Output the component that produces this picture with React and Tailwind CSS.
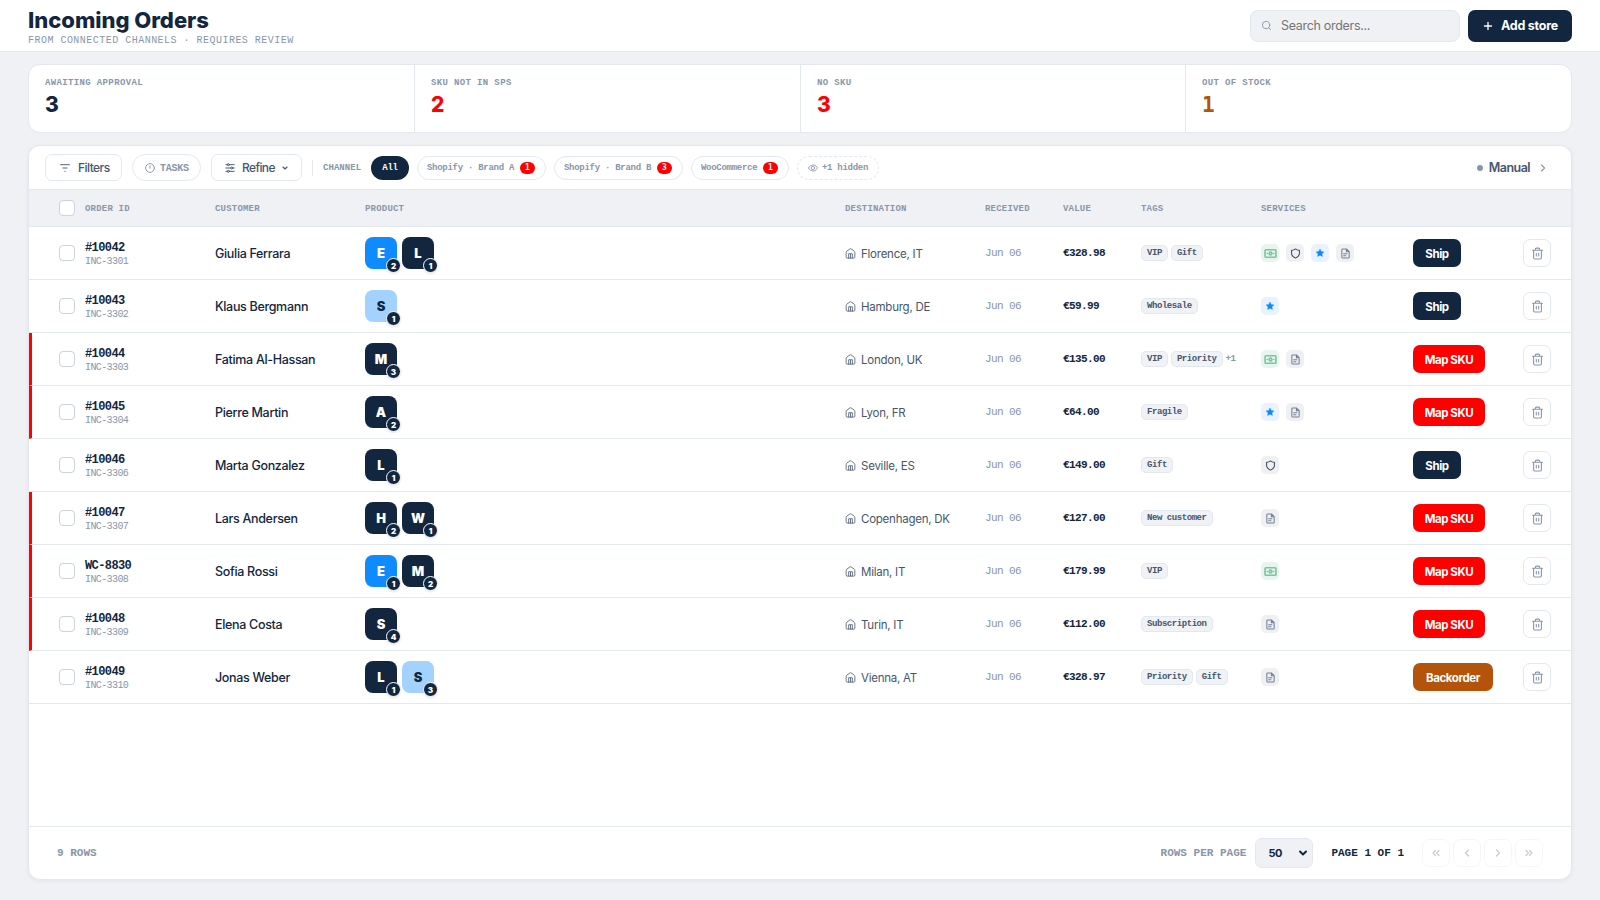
import React from 'react';
import { ChevronRight, ChevronLeft, ChevronsLeft, ChevronsRight, ChevronDown, Search, Plus } from 'lucide-react';

const SANS = "font-['Inter',sans-serif]";
const MONO = "font-['Liberation_Mono',monospace]";
const SLAB = "font-['DejaVu_Sans_Mono',monospace]";

function Svg({ className, children, width = 1.8 }) {
  return (
    <svg viewBox="0 0 24 24" fill="none" stroke="currentColor" strokeWidth={width} strokeLinecap="round" strokeLinejoin="round" className={className}>
      {children}
    </svg>
  );
}

const House = () => (
  <Svg className="h-[11px] w-[11px] shrink-0 text-[#5b6b82]" width={2}>
    <path d="M2.500 9.500 Q2.500 8 3.800 7 L10.500 2.200 Q12 1.200 13.500 2.200 L20.200 7 Q21.500 8 21.500 9.500 V20 Q21.500 22 19.500 22 H4.500 Q2.500 22 2.500 20 Z" />
    <path d="M8 22 V12.500 H16 V22 M12 14 V22" />
  </Svg>
);

const Trash = () => (
  <Svg className="h-[13px] w-[13px] text-[#8896ab]" width={2}>
    <path d="M2.800 6 H21.200 M8 6 V4 Q8 2 10 2 H14 Q16 2 16 4 V6 M4.800 6 V20 Q4.800 22 6.800 22 H17.200 Q19.200 22 19.200 20 V6 M9.800 11.500 V16.500 M14.200 11.500 V16.500" />
  </Svg>
);

const SERVICES = {
  cash: {
    box: 'bg-[#e8f5ef] text-[#7cc4a2]',
    icon: (
      <Svg className="h-[13px] w-[13px]" width={3}>
        <rect x="2" y="5" width="20" height="14" rx="1.500" />
        <circle cx="12" cy="12" r="2.600" />
        <path d="M6 12 H6.100 M17.900 12 H18" />
      </Svg>
    ),
  },
  shield: {
    box: 'bg-[#eff0f2] text-[#33445c]',
    icon: (
      <Svg className="h-[11px] w-[11px]" width={2.200}>
        <path d="M12 2 L14.500 3.600 Q17 5 20.500 5 V12 Q20.500 18 12 22 Q3.500 18 3.500 12 V5 Q7 5 9.500 3.600 Z" />
      </Svg>
    ),
  },
  star: {
    box: 'bg-[#e8f3ff] text-[#0d8bff]',
    icon: (
      <svg viewBox="0 0 24 24" fill="currentColor" className="-ml-px h-[10px] w-[10px]">
        <path d="M12 2.500 L14.900 8.400 L21.400 9.300 L16.700 13.900 L17.800 20.400 L12 17.300 L6.200 20.400 L7.300 13.900 L2.600 9.300 L9.100 8.400 Z" stroke="currentColor" strokeWidth="1" strokeLinejoin="round" />
      </svg>
    ),
  },
  doc: {
    box: 'bg-[#eff0f2] text-[#718096]',
    icon: (
      <Svg className="h-[11px] w-[11px]" width={2.300}>
        <path d="M14 2 H6 Q4 2 4 4 V20 Q4 22 6 22 H18 Q20 22 20 20 V8 Z M14 2 V8 H20 M8 12.500 H15 M8 17 H13" />
      </Svg>
    ),
  },
};

const TONES = {
  blue: 'bg-[#0d8bff] text-white',
  navy: 'bg-[#122640] text-white',
  sky: 'bg-[#a3d2ff] text-[#122640]',
};

const ACTIONS = {
  Ship: 'w-12 bg-[#122640]',
  'Map SKU': 'w-[72px] bg-[#ff0000]',
  Backorder: 'w-20 bg-[#b45309]',
};

const STATS = [
  { label: 'AWAITING APPROVAL', value: '3', style: 'font-extrabold text-[#122640]' },
  { label: 'SKU NOT IN SPS', value: '2', style: 'font-extrabold text-[#ff0000]' },
  { label: 'NO SKU', value: '3', style: 'font-extrabold text-[#ff0000]' },
  { label: 'OUT OF STOCK', value: '1', style: `${SLAB} font-bold text-[#b45309]` },
];

const CHANNELS = [
  { name: 'Shopify · Brand A', count: 1, width: 'w-[129px]' },
  { name: 'Shopify · Brand B', count: 3, width: 'w-[129px]' },
  { name: 'WooCommerce', count: 1, width: 'w-[98px]' },
];

const ORDERS = [
  { id: '#10042', ref: 'INC-3301', name: 'Giulia Ferrara', items: [['E', 2, 'blue'], ['L', 1, 'navy']], dest: 'Florence, IT', value: '€328.98', tags: ['VIP', 'Gift'], services: ['cash', 'shield', 'star', 'doc'], action: 'Ship' },
  { id: '#10043', ref: 'INC-3302', name: 'Klaus Bergmann', items: [['S', 1, 'sky']], dest: 'Hamburg, DE', value: '€59.99', tags: ['Wholesale'], services: ['star'], action: 'Ship' },
  { id: '#10044', ref: 'INC-3303', name: 'Fatima Al-Hassan', items: [['M', 3, 'navy']], dest: 'London, UK', value: '€135.00', tags: ['VIP', 'Priority'], more: '+1', services: ['cash', 'doc'], action: 'Map SKU' },
  { id: '#10045', ref: 'INC-3304', name: 'Pierre Martin', items: [['A', 2, 'navy']], dest: 'Lyon, FR', value: '€64.00', tags: ['Fragile'], services: ['star', 'doc'], action: 'Map SKU' },
  { id: '#10046', ref: 'INC-3306', name: 'Marta Gonzalez', items: [['L', 1, 'navy']], dest: 'Seville, ES', value: '€149.00', tags: ['Gift'], services: ['shield'], action: 'Ship' },
  { id: '#10047', ref: 'INC-3307', name: 'Lars Andersen', items: [['H', 2, 'navy'], ['W', 1, 'navy']], dest: 'Copenhagen, DK', value: '€127.00', tags: ['New customer'], services: ['doc'], action: 'Map SKU' },
  { id: 'WC-8830', ref: 'INC-3308', name: 'Sofia Rossi', items: [['E', 1, 'blue'], ['M', 2, 'navy']], dest: 'Milan, IT', value: '€179.99', tags: ['VIP'], services: ['cash'], action: 'Map SKU' },
  { id: '#10048', ref: 'INC-3309', name: 'Elena Costa', items: [['S', 4, 'navy']], dest: 'Turin, IT', value: '€112.00', tags: ['Subscription'], services: ['doc'], action: 'Map SKU' },
  { id: '#10049', ref: 'INC-3310', name: 'Jonas Weber', items: [['L', 1, 'navy'], ['S', 3, 'sky']], dest: 'Vienna, AT', value: '€328.97', tags: ['Priority', 'Gift'], services: ['doc'], action: 'Backorder' },
];

const COLS = 'grid grid-cols-[26px_130px_150px_480px_140px_78px_78px_120px_152px_110px_28px] items-center';

const Checkbox = () => <span className="block h-4 w-4 rounded-[4px] border border-[#cbd3df] bg-white" />;

function Row({ order }) {
  return (
    <div className={`${COLS} h-[53px] border-b border-[#e2e8f0] ${order.action === 'Map SKU' ? 'pl-[27px] border-l-[3px] border-l-[#ff0000]' : 'pl-[30px]'}`}>
      <Checkbox />
      <div className={`${MONO} flex flex-col pt-[2px]`}>
        <span className="text-[12px] font-bold leading-[15px] tracking-[-0.6px] text-[#122640]">{order.id}</span>
        <span className="text-[10px] leading-[12px] tracking-[-0.6px] text-[#8896ab]">{order.ref}</span>
      </div>
      <span className="pt-[2px] text-[12.5px] font-medium tracking-[-0.32px] text-[#122640]">{order.name}</span>
      <div className="flex gap-[5px]">
        {order.items.map(([letter, qty, tone], i) => (
          <div key={i} className={`relative flex h-8 w-8 items-center justify-center rounded-lg pt-px text-[13px] font-black ${TONES[tone]}`}>
            {letter}
            <span className="absolute -bottom-1 -right-1 flex h-[15px] w-[15px] items-center justify-center rounded-full border-[1.5px] border-white bg-[#122640] pt-px text-[8px] font-black leading-none text-white shadow-[0_1px_2px_rgba(18,38,64,0.12)]">
              {qty}
            </span>
          </div>
        ))}
      </div>
      <div className="flex items-center gap-[5px] text-[11.5px] tracking-[-0.24px] text-[#46566e]">
        <House />
        <span className="pt-[3px]">{order.dest}</span>
      </div>
      <span className={`${MONO} text-[11px] tracking-[-0.6px] text-[#8896ab]`}>Jun 06</span>
      <span className={`${MONO} text-[11px] font-bold tracking-[-0.6px] text-[#122640]`}>{order.value}</span>
      <div className={`${MONO} flex items-center gap-[3px] text-[9px] font-bold tracking-[-0.44px] text-[#46566e]`}>
        {order.tags.map((t) => (
          <span key={t} className="flex h-4 items-center whitespace-nowrap rounded-[5px] border border-[#e2e8f0] bg-[#f0f2f6] px-[5px] pt-[2px]">{t}</span>
        ))}
        {order.more && <span className="pt-[2px] text-[#8896ab]">{order.more}</span>}
      </div>
      <div className="flex gap-[7px]">
        {order.services.map((s) => (
          <span key={s} className={`flex h-[18px] w-[18px] items-center justify-center rounded-[5px] ${SERVICES[s].box}`}>{SERVICES[s].icon}</span>
        ))}
      </div>
      <button className={`flex h-7 items-center justify-center whitespace-nowrap rounded-[7px] pt-[3px] text-[11.5px] font-bold tracking-[-0.42px] text-white ${ACTIONS[order.action]}`}>{order.action}</button>
      <button className="flex h-7 w-7 items-center justify-center rounded-[7px] border border-[#e2e8f0]"><Trash /></button>
    </div>
  );
}

function PageButton({ icon: Icon }) {
  return (
    <button className="flex h-7 w-7 items-center justify-center rounded-[7px] border border-[#e2e8f0] text-[#5b6b82] opacity-35">
      <Icon className="h-3 w-3" strokeWidth={2.400} />
    </button>
  );
}

export default function App() {
  return (
    <div className={`${SANS} flex h-[900px] w-full flex-col bg-[#f0f1f5] text-[#122640]`}>
      <header className="flex h-[52px] shrink-0 items-center justify-between border-b border-[#e2e8f0] bg-white px-7">
        <div className="flex flex-col pt-[3px]">
          <h1 className="text-[22px] font-extrabold leading-[26px] tracking-[-0.02px]">Incoming Orders</h1>
          <p className={`${MONO} pt-[2px] text-[10px] leading-3 tracking-[0.48px] text-[#8896ab]`}>FROM CONNECTED CHANNELS · REQUIRES REVIEW</p>
        </div>
        <div className="flex gap-2">
          <div className="flex h-8 w-[210px] items-center gap-[9px] rounded-lg border border-[#e2e8f0] bg-[#f0f1f5] pl-[10px]">
            <Search className="h-[11px] w-[11px] text-[#8896ab]" strokeWidth={2} />
            <span className="pt-px text-[12.5px] tracking-[-0.31px] text-[#757575]">Search orders...</span>
          </div>
          <button className="flex h-8 w-[104px] items-center gap-[7px] rounded-[7px] bg-[#122640] pl-[14px] text-white">
            <Plus className="h-3 w-3" strokeWidth={2.600} />
            <span className="pt-px text-[12.5px] font-bold tracking-[-0.25px]">Add store</span>
          </button>
        </div>
      </header>

      <main className="flex min-h-0 flex-1 flex-col gap-3 px-7 pb-5 pt-3">
        <section className="grid h-[69px] shrink-0 grid-cols-[386px_386px_385px_1fr] overflow-hidden rounded-xl border border-[#e2e8f0] bg-white">
          {STATS.map((s, i) => (
            <div key={i} className={`flex flex-col pl-4 pt-3 ${i < 3 ? 'border-r border-[#e2e8f0]' : ''}`}>
              <span className={`${MONO} text-[9px] font-bold leading-3 tracking-[0.36px] text-[#8896ab]`}>{s.label}</span>
              <span className={`mt-[5px] text-[21px] leading-[22px] ${s.style}`}>{s.value}</span>
            </div>
          ))}
        </section>

        <section className="flex min-h-0 flex-1 flex-col overflow-hidden rounded-xl border border-[#e2e8f0] bg-white shadow-[0_1px_4px_rgba(18,38,64,0.06)]">
          <div className="flex h-11 shrink-0 items-center border-b border-[#e2e8f0] pl-4 pr-[22px]">
            <button className="flex h-[27px] w-[77px] items-center gap-[8px] rounded-[7px] border border-[#e2e8f0] pl-[14px] text-[#46566e]">
              <Svg className="h-[10px] w-[10px]" width={2.200}><path d="M1.500 4 H22.500 M7 12 H17 M11.500 20 H12.500" /></Svg>
              <span className="pt-px text-[12px] font-medium tracking-[-0.55px]">Filters</span>
            </button>
            <button className={`${MONO} ml-[10px] flex h-[27px] w-[69px] items-center gap-[5px] rounded-full border border-[#e2e8f0] pl-3 text-[#8896ab]`}>
              <Svg className="h-[10px] w-[10px]" width={2.200}><circle cx="12" cy="12" r="10.500" /><path d="M12 7 V12.500" /></Svg>
              <span className="pt-px text-[10px] font-bold tracking-[-0.24px]">TASKS</span>
            </button>
            <button className="ml-[10px] flex h-[27px] w-[91px] items-center rounded-[7px] border border-[#e2e8f0] pl-[13px] text-[#46566e]">
              <Svg className="h-[10px] w-[10px]" width={2.300}>
                <path d="M2 4 H5 M11 4 H22 M2 12 H13 M19 12 H22 M2 20 H5 M11 20 H22" />
                <circle cx="8" cy="4" r="2.500" /><circle cx="16" cy="12" r="2.500" /><circle cx="8" cy="20" r="2.500" />
              </Svg>
              <span className="ml-[7px] pt-px text-[12px] font-medium tracking-[-0.6px]">Refine</span>
              <ChevronDown className="ml-[6px] h-2 w-2" strokeWidth={3.500} />
            </button>
            <span className="ml-[10px] h-4 w-px bg-[#e2e8f0]" />
            <span className={`${MONO} ml-[10px] w-12 pt-[2px] text-[9px] font-bold tracking-[0.04px] text-[#8896ab]`}>CHANNEL</span>
            <div className={`${MONO} flex gap-2 text-[9px] font-bold tracking-[-0.28px] text-[#8896ab]`}>
              <button className="h-6 w-[38px] rounded-full bg-[#122640] pt-[2px] text-white">All</button>
              {CHANNELS.map((c) => (
                <button key={c.name} className={`flex h-6 items-center justify-between rounded-full border border-[#e2e8f0] pl-[9px] pr-[10px] ${c.width}`}>
                  <span className="pt-[2px]">{c.name}</span>
                  <span className={`${SLAB} flex h-3 w-[15px] items-center justify-center rounded-full bg-[#ff0000] text-[8px] leading-none tracking-normal text-white`}>{c.count}</span>
                </button>
              ))}
              <button className="flex h-6 w-[82px] items-center gap-1 rounded-full border border-dashed border-[#e2e8f0] pl-[10px]">
                <Svg className="h-[10px] w-[10px]" width={2}><path d="M1 12 Q5 4.500 12 4.500 Q19 4.500 23 12 Q19 19.500 12 19.500 Q5 19.500 1 12 Z" /><circle cx="12" cy="12" r="4" /></Svg>
                <span className="pt-[2px]">+1 hidden</span>
              </button>
            </div>
            <div className="ml-auto flex items-center text-[#46566e]">
              <span className="h-[6px] w-[6px] rounded-full bg-[#8896ab]" />
              <span className="ml-[6px] pt-px text-[12.5px] font-semibold tracking-[-0.55px]">Manual</span>
              <ChevronRight className="ml-[7px] h-3 w-3 text-[#8896ab]" strokeWidth={2.300} />
            </div>
          </div>

          <div className={`${COLS} ${MONO} h-[37px] shrink-0 border-b border-[#e2e8f0] bg-[#f0f1f5] pl-[30px] text-[9px] font-bold tracking-[0.2px] text-[#8896ab]`}>
            <Checkbox />
            {['ORDER ID', 'CUSTOMER', 'PRODUCT', 'DESTINATION', 'RECEIVED', 'VALUE', 'TAGS', 'SERVICES'].map((h) => (
              <span key={h} className="pt-[3px]">{h}</span>
            ))}
          </div>

          <div className="min-h-0 flex-1">
            {ORDERS.map((o) => <Row key={o.id} order={o} />)}
          </div>

          <footer className={`${MONO} flex h-[53px] shrink-0 items-center justify-between border-t border-[#e2e8f0] px-7 text-[11px] font-bold text-[#8896ab]`}>
            <span>9 ROWS</span>
            <div className="flex items-center">
              <span>ROWS PER PAGE</span>
              <div className="ml-[9px] flex h-[30px] w-[58px] items-center justify-between rounded-[7px] border border-[#e2e8f0] bg-[#f0f1f5] pl-3 pr-[3px] text-[#122640]">
                <span className={`${SANS} pt-px text-[11px] tracking-[-0.4px]`}>50</span>
                <ChevronDown className="h-3 w-3" strokeWidth={4} />
              </div>
              <span className="ml-[18px] text-[#122640]">PAGE 1 OF 1</span>
              <div className="ml-[18px] flex gap-[3px]">
                <PageButton icon={ChevronsLeft} />
                <PageButton icon={ChevronLeft} />
                <PageButton icon={ChevronRight} />
                <PageButton icon={ChevronsRight} />
              </div>
            </div>
          </footer>
        </section>
      </main>
    </div>
  );
}
